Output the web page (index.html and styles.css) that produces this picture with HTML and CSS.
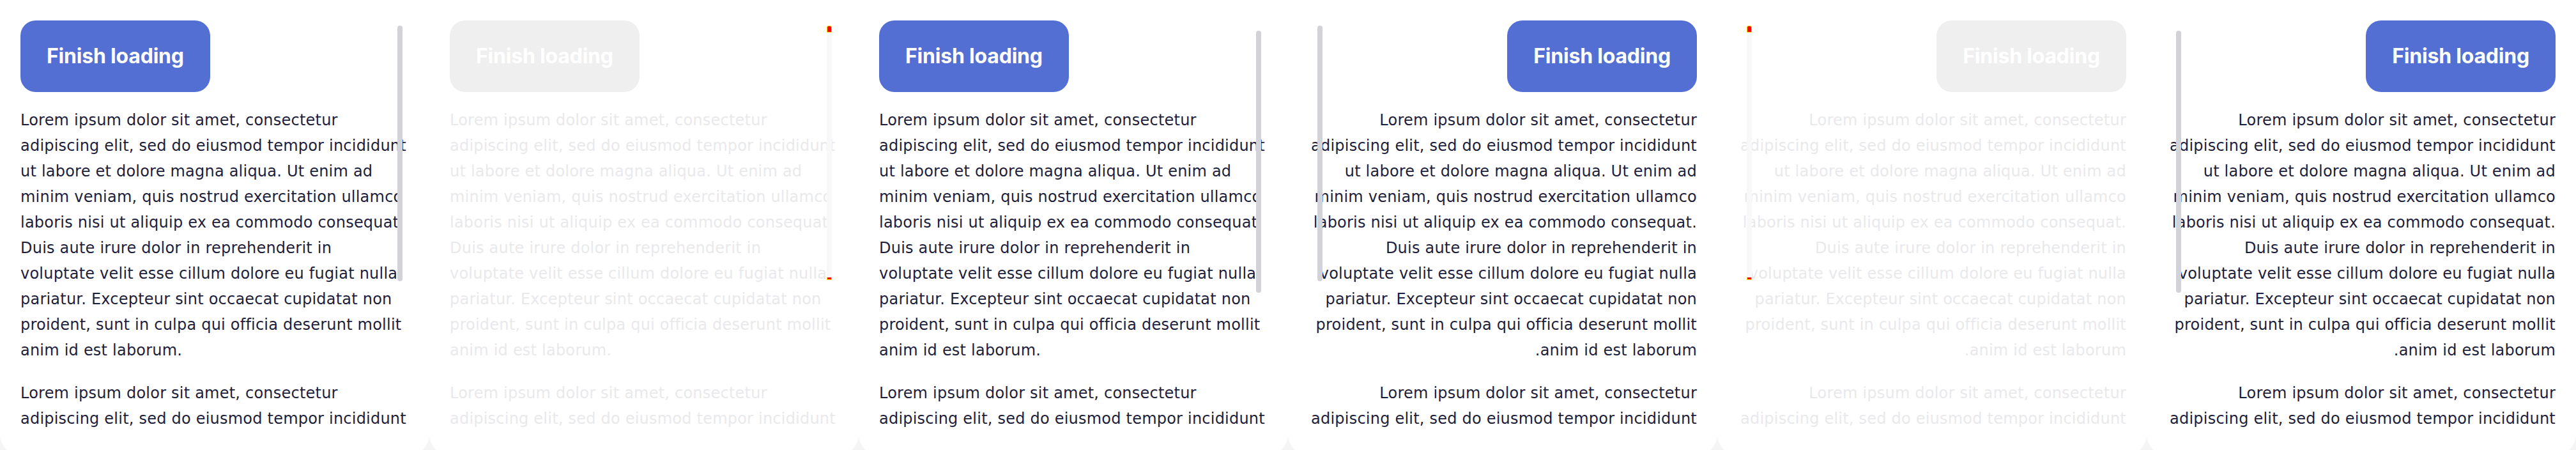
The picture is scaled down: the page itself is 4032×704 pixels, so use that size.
FILE: index.html
```html
<!DOCTYPE html>
<html lang="en">

<head>
  <meta charset="UTF-8">
  <meta name="viewport" content="width=device-width, initial-scale=1.0">
  <title>Scroll area loading</title>
  <link rel="stylesheet" href="styles.css">
</head>

<body>
  <div class="demo">

    <section class="panel">
      <div class="content">
        <button class="btn">Finish loading</button>
        <p>Lorem ipsum dolor sit amet, consectetur adipiscing elit, sed do eiusmod tempor incididunt ut labore et dolore magna aliqua. Ut enim ad minim veniam, quis nostrud exercitation ullamco laboris nisi ut aliquip ex ea commodo consequat. Duis aute irure dolor in reprehenderit in voluptate velit esse cillum dolore eu fugiat nulla pariatur. Excepteur sint occaecat cupidatat non proident, sunt in culpa qui officia deserunt mollit anim id est laborum.</p>
        <p>Lorem ipsum dolor sit amet, consectetur adipiscing elit, sed do eiusmod tempor incididunt ut labore et dolore magna aliqua.</p>
      </div>
      <div class="thumb"></div>
    </section>

    <section class="panel loading">
      <div class="content">
        <button class="btn">Finish loading</button>
        <p>Lorem ipsum dolor sit amet, consectetur adipiscing elit, sed do eiusmod tempor incididunt ut labore et dolore magna aliqua. Ut enim ad minim veniam, quis nostrud exercitation ullamco laboris nisi ut aliquip ex ea commodo consequat. Duis aute irure dolor in reprehenderit in voluptate velit esse cillum dolore eu fugiat nulla pariatur. Excepteur sint occaecat cupidatat non proident, sunt in culpa qui officia deserunt mollit anim id est laborum.</p>
        <p>Lorem ipsum dolor sit amet, consectetur adipiscing elit, sed do eiusmod tempor incididunt ut labore et dolore magna aliqua.</p>
      </div>
      <div class="thumb"></div>
    </section>

    <section class="panel scrolled">
      <div class="content">
        <button class="btn">Finish loading</button>
        <p>Lorem ipsum dolor sit amet, consectetur adipiscing elit, sed do eiusmod tempor incididunt ut labore et dolore magna aliqua. Ut enim ad minim veniam, quis nostrud exercitation ullamco laboris nisi ut aliquip ex ea commodo consequat. Duis aute irure dolor in reprehenderit in voluptate velit esse cillum dolore eu fugiat nulla pariatur. Excepteur sint occaecat cupidatat non proident, sunt in culpa qui officia deserunt mollit anim id est laborum.</p>
        <p>Lorem ipsum dolor sit amet, consectetur adipiscing elit, sed do eiusmod tempor incididunt ut labore et dolore magna aliqua.</p>
      </div>
      <div class="thumb"></div>
    </section>

    <section class="panel" dir="rtl">
      <div class="content">
        <button class="btn">Finish loading</button>
        <p>Lorem ipsum dolor sit amet, consectetur adipiscing elit, sed do eiusmod tempor incididunt ut labore et dolore magna aliqua. Ut enim ad minim veniam, quis nostrud exercitation ullamco laboris nisi ut aliquip ex ea commodo consequat. Duis aute irure dolor in reprehenderit in voluptate velit esse cillum dolore eu fugiat nulla pariatur. Excepteur sint occaecat cupidatat non proident, sunt in culpa qui officia deserunt mollit anim id est laborum.</p>
        <p>Lorem ipsum dolor sit amet, consectetur adipiscing elit, sed do eiusmod tempor incididunt ut labore et dolore magna aliqua.</p>
      </div>
      <div class="thumb"></div>
    </section>

    <section class="panel loading" dir="rtl">
      <div class="content">
        <button class="btn">Finish loading</button>
        <p>Lorem ipsum dolor sit amet, consectetur adipiscing elit, sed do eiusmod tempor incididunt ut labore et dolore magna aliqua. Ut enim ad minim veniam, quis nostrud exercitation ullamco laboris nisi ut aliquip ex ea commodo consequat. Duis aute irure dolor in reprehenderit in voluptate velit esse cillum dolore eu fugiat nulla pariatur. Excepteur sint occaecat cupidatat non proident, sunt in culpa qui officia deserunt mollit anim id est laborum.</p>
        <p>Lorem ipsum dolor sit amet, consectetur adipiscing elit, sed do eiusmod tempor incididunt ut labore et dolore magna aliqua.</p>
      </div>
      <div class="thumb"></div>
    </section>

    <section class="panel scrolled" dir="rtl">
      <div class="content">
        <button class="btn">Finish loading</button>
        <p>Lorem ipsum dolor sit amet, consectetur adipiscing elit, sed do eiusmod tempor incididunt ut labore et dolore magna aliqua. Ut enim ad minim veniam, quis nostrud exercitation ullamco laboris nisi ut aliquip ex ea commodo consequat. Duis aute irure dolor in reprehenderit in voluptate velit esse cillum dolore eu fugiat nulla pariatur. Excepteur sint occaecat cupidatat non proident, sunt in culpa qui officia deserunt mollit anim id est laborum.</p>
        <p>Lorem ipsum dolor sit amet, consectetur adipiscing elit, sed do eiusmod tempor incididunt ut labore et dolore magna aliqua.</p>
      </div>
      <div class="thumb"></div>
    </section>

  </div>
</body>

</html>
```

FILE: styles.css
```css
* {
  margin: 0;
  padding: 0;
  box-sizing: border-box;
}
html,
body {
  height: 704px;
  overflow: hidden;
  background: #f5f5f7;
}
body {
  font-family: "DejaVu Sans", Inter, sans-serif;
  color: #1d1e3c;
}
.demo {
  display: flex;
}
.panel {
  position: relative;
  width: 672px;
  height: 712px;
  flex: none;
  overflow: hidden;
  background: #fff;
  border-radius: 0 0 32px 32px;
}
.content {
  height: 684px;
  overflow: hidden;
  padding: 32px 32px 0;
}
.btn {
  display: block;
  padding: 40px 41px;
  border: 0;
  border-radius: 24px;
  background: #536fd3;
  color: #fff;
  font: 700 32px/32px Inter, "Noto Sans", sans-serif;
  letter-spacing: -0.2px;
  margin-bottom: 24px;
}
.content p {
  font-size: 24px;
  line-height: 40px;
  letter-spacing: 0.22px;
  margin-bottom: 27px;
}

/* overlay scrollbar */
.thumb {
  position: absolute;
  top: 40px;
  right: 42px;
  width: 8px;
  height: 400px;
  border-radius: 4px;
  background: #d2d2d9;
}
.panel[dir="rtl"] .thumb {
  right: auto;
  left: 46px;
}
.scrolled .thumb {
  top: 48px;
  height: 410px;
}

/* loading state */
.loading .btn {
  background: #efefef;
}
.loading p {
  color: #e9e9ec;
}
.loading .thumb {
  height: 398px;
  border-radius: 0;
  background: #f8f8f8;
}
.loading .thumb::before,
.loading .thumb::after {
  content: "";
  position: absolute;
  left: 0;
  right: 0;
  background: #ff0000;
  border: 1px solid #ffe600;
}
.loading .thumb::before {
  top: 0;
  height: 9px;
  border-radius: 3px 3px 0 0;
}
.loading .thumb::after {
  bottom: 0;
  height: 3px;
  border-top: 0;
}
```
